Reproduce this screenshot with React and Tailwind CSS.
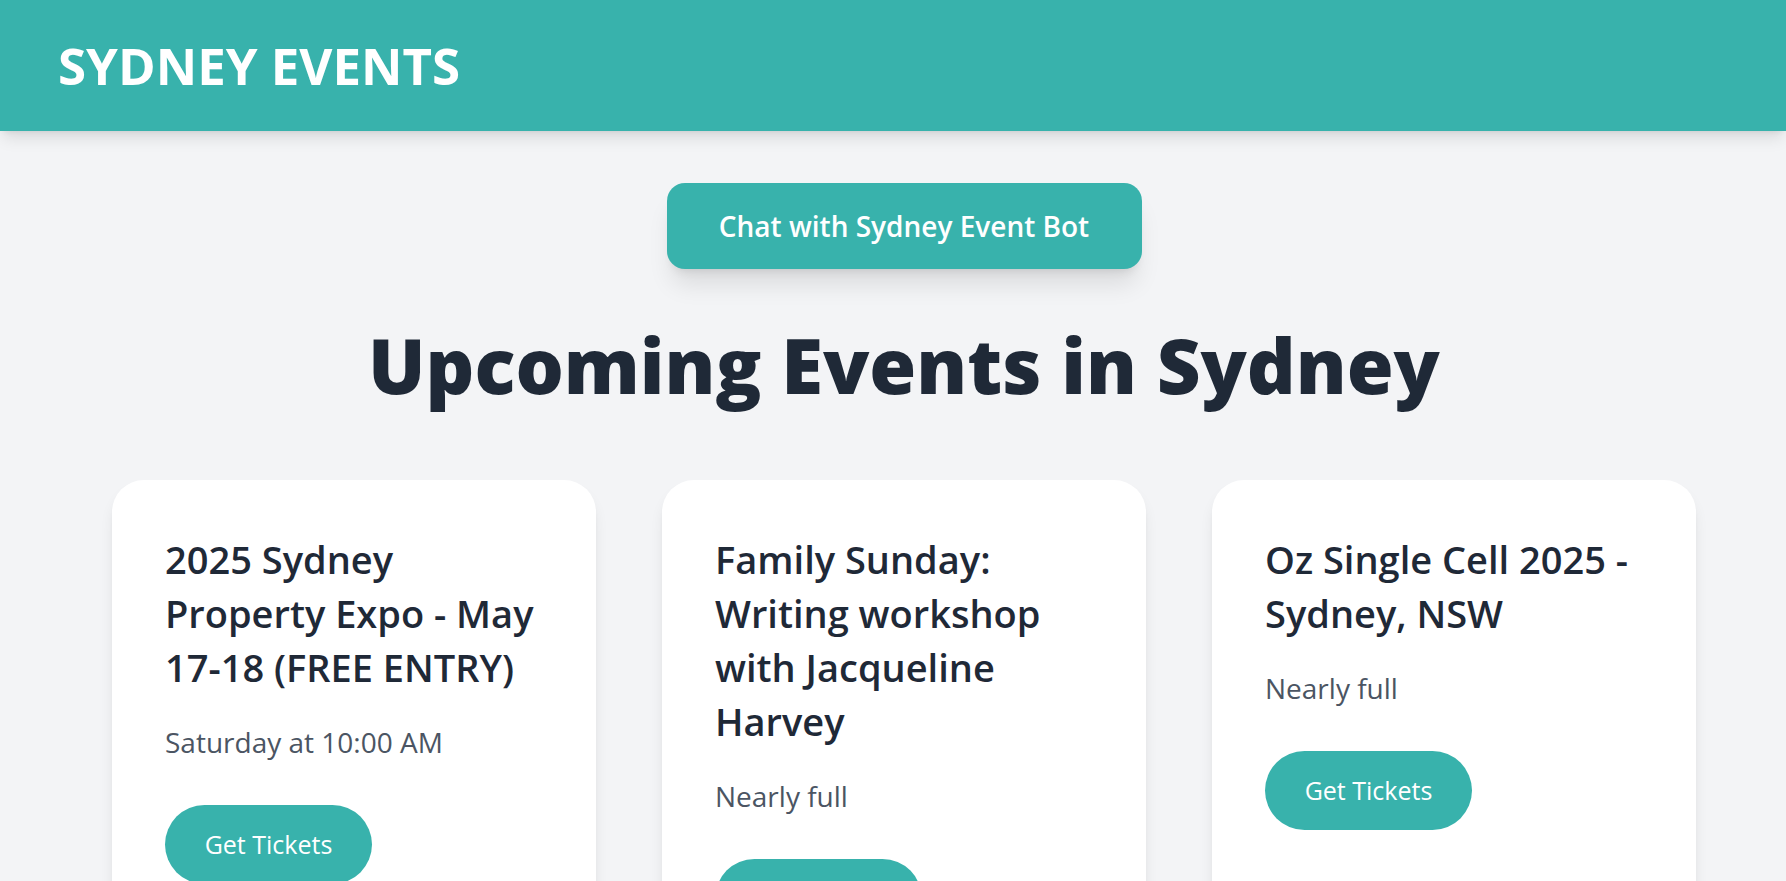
const events = [
  { title: '2025 Sydney Property Expo - May 17-18 (FREE ENTRY)', when: 'Saturday at 10:00 AM' },
  { title: 'Family Sunday: Writing workshop with Jacqueline Harvey', when: 'Nearly full' },
  { title: 'Oz Single Cell 2025 - Sydney, NSW', when: 'Nearly full' },
]

function EventCard({ event }) {
  return (
    <div className="bg-white rounded-[32px] shadow-lg pt-[52px] px-[53px] pb-[53px]">
      <h3 className="text-[38px] leading-[54px] font-semibold text-[#1f2937]">{event.title}</h3>
      <p className="mt-[27px] text-[28px] leading-[42px] text-[#4b5563]">{event.when}</p>
      <button className="mt-[42px] h-[79px] w-[207px] rounded-full bg-[#38b2ac] text-white text-[25px] leading-[39px]">
        Get Tickets
      </button>
    </div>
  )
}

export default function App() {
  return (
    <div className="min-h-screen bg-[#f3f4f6] font-['Open_Sans',sans-serif]">
      <header className="h-[131px] bg-[#38b2ac] shadow-lg flex items-center pl-[58px]">
        <h1 className="text-[51px] leading-none font-bold text-white">SYDNEY EVENTS</h1>
      </header>

      <main className="pl-[22px] flex flex-col items-center">
        <button className="mt-[52px] h-[86px] w-[475px] rounded-[18px] bg-[#38b2ac] text-white text-[28px] font-semibold shadow-xl">
          Chat with Sydney Event Bot
        </button>

        <h2 className="mt-[50px] text-[76px] leading-[1.2] font-extrabold text-[#1f2937]">
          Upcoming Events in Sydney
        </h2>

        <div className="mt-[70px] grid grid-cols-3 gap-[66px] w-[1584px]">
          {events.map(e => (
            <EventCard key={e.title} event={e} />
          ))}
        </div>
      </main>
    </div>
  )
}
